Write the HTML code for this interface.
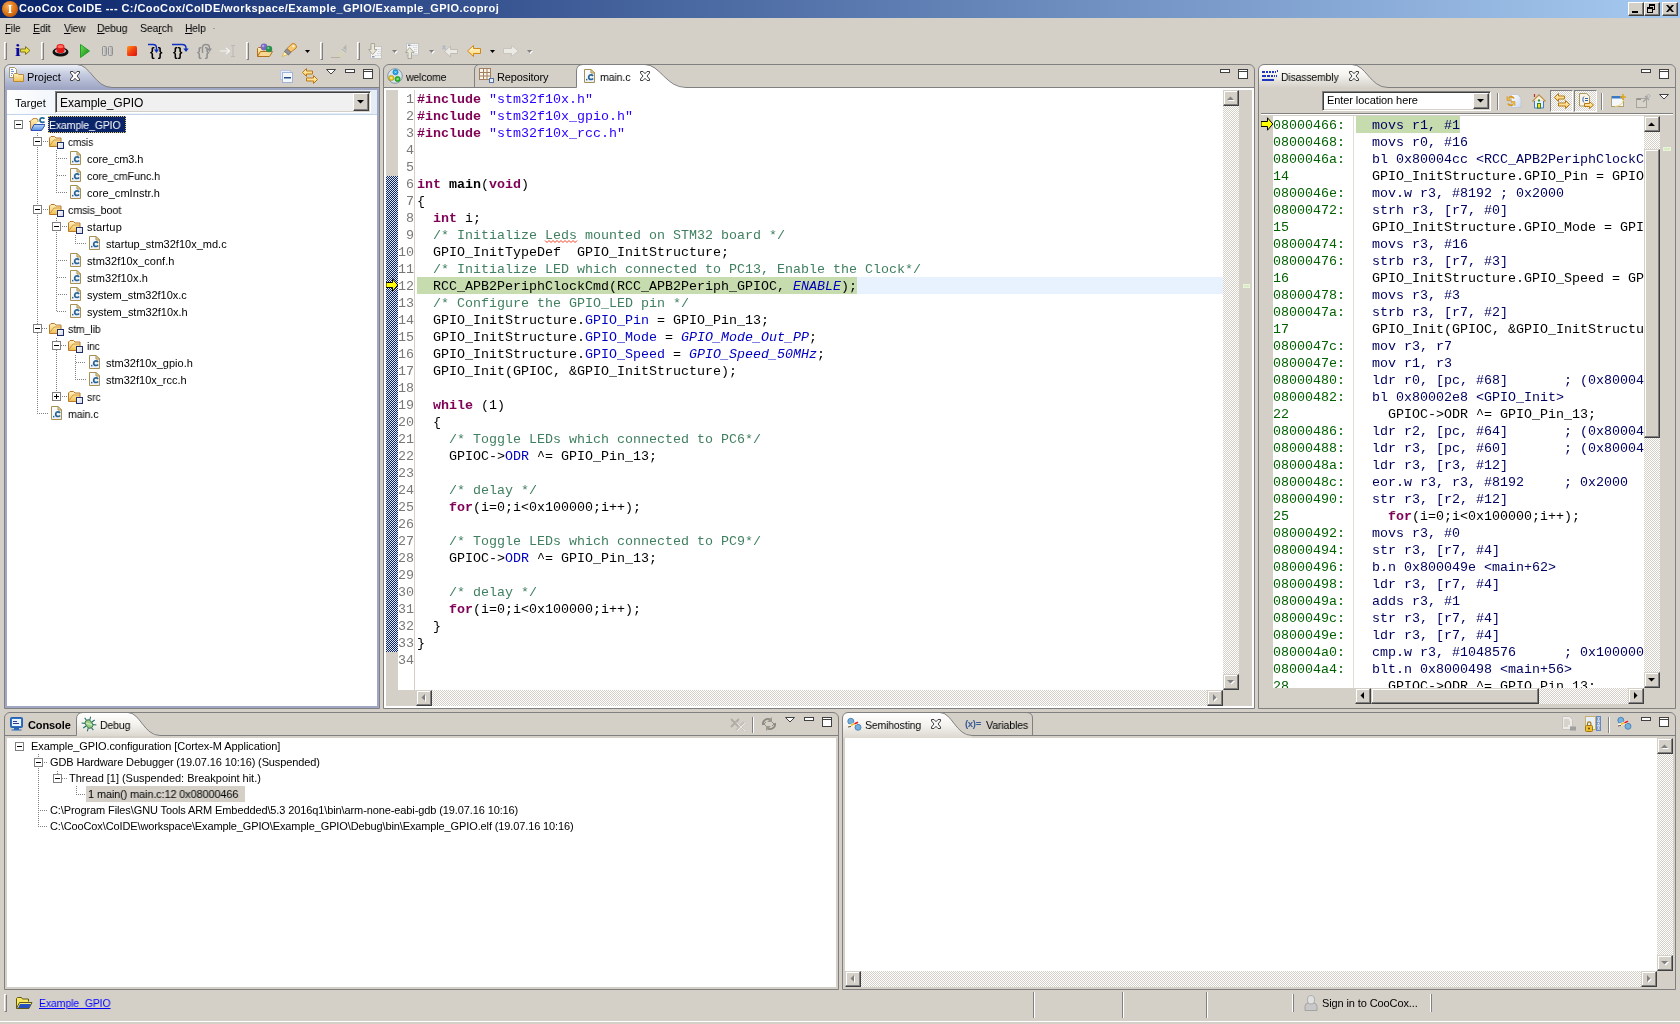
<!DOCTYPE html>
<html><head><meta charset="utf-8"><title>CooCox CoIDE</title>
<style>
*{box-sizing:border-box;margin:0;padding:0}
html,body{width:1680px;height:1024px;overflow:hidden;background:#D4D0C8}
body{position:relative;font:11px "Liberation Sans",sans-serif;color:#000}
.a{position:absolute}
.t{position:absolute;white-space:pre;line-height:13px;height:13px;will-change:transform}
.m{position:absolute;white-space:pre;font:13.33px "Liberation Mono",monospace;line-height:17px;height:17px;will-change:transform}
.kw{color:#7F0055;font-weight:bold}
.st{color:#2A00FF}
.cm{color:#3F7F5F}
.fd{color:#0000C0}
.en{color:#0000C0;font-style:italic}
.b{font-weight:bold}
.ln{color:#787878}
.ad{color:#006000}
.in{color:#000060}
.dith{background-image:conic-gradient(#fff 25%,#D4D0C8 0 50%,#fff 0 75%,#D4D0C8 0);background-size:2px 2px}
.btn{position:absolute;background:#D4D0C8;border:1px solid;border-color:#fff #404040 #404040 #fff;box-shadow:inset -1px -1px 0 #808080,inset 1px 1px 0 #D4D0C8}
.sb{position:absolute;background:#D4D0C8;border:1px solid;border-color:#D4D0C8 #404040 #404040 #D4D0C8;box-shadow:inset -1px -1px 0 #808080,inset 1px 1px 0 #fff}
.sunk{position:absolute;border:1px solid;border-color:#808080 #fff #fff #808080;box-shadow:inset 1px 1px 0 #404040,inset -1px -1px 0 #D4D0C8}
.grip{position:absolute;width:2px;border-left:1px solid #fff;border-right:1px solid #808080}
svg{position:absolute;overflow:visible}
</style></head>
<body>

<svg width="0" height="0" style="position:absolute">
<defs>
<linearGradient id="gFold" x1="0" y1="0" x2="0" y2="1"><stop offset="0" stop-color="#FFF3C0"/><stop offset="1" stop-color="#F0C050"/></linearGradient>
<linearGradient id="gFoldB" x1="0" y1="0" x2="0" y2="1"><stop offset="0" stop-color="#FFE9A0"/><stop offset="1" stop-color="#E8B040"/></linearGradient>
<linearGradient id="gPage" x1="0" y1="0" x2="1" y2="1"><stop offset="0" stop-color="#FFFFFF"/><stop offset="1" stop-color="#E4ECF8"/></linearGradient>
<linearGradient id="gBlueF" x1="0" y1="0" x2="0" y2="1"><stop offset="0" stop-color="#B8D8F8"/><stop offset="1" stop-color="#5890E0"/></linearGradient>
<linearGradient id="gOv" x1="0" y1="0" x2="1" y2="1"><stop offset="0" stop-color="#FFFFFF"/><stop offset="1" stop-color="#D0D4E0"/></linearGradient>
<linearGradient id="gArrY" x1="0" y1="0" x2="0" y2="1"><stop offset="0" stop-color="#FFF8D0"/><stop offset="1" stop-color="#FFC850"/></linearGradient>
<linearGradient id="gGreen" x1="0" y1="0" x2="1" y2="1"><stop offset="0" stop-color="#70E060"/><stop offset="1" stop-color="#108010"/></linearGradient>
<linearGradient id="gRed" x1="0" y1="0" x2="1" y2="1"><stop offset="0" stop-color="#FF9020"/><stop offset="1" stop-color="#E01010"/></linearGradient>

<!-- C file icon -->
<symbol id="iFile" viewBox="0 0 16 16">
 <path d="M3.500 1.500h6.500l3.500 3.500v9.500h-10z" fill="url(#gPage)" stroke="#A89050" stroke-width="1"/>
 <path d="M10 1.500v3.500h3.500z" fill="#F4E4B0" stroke="#A89050" stroke-width="1" stroke-linejoin="round"/>
 <rect x="5" y="10.900" width="1.400" height="1.500" fill="#2A6496"/>
 <path d="M12.100 7.900C11.500 7.200 10.800 6.900 10 6.900 8.600 6.900 7.700 7.900 7.700 9.200s.900 2.300 2.300 2.300c.800 0 1.500-.300 2.100-1" fill="none" stroke="#2A6496" stroke-width="1.700"/>
</symbol>

<!-- folder with small box overlay -->
<symbol id="iFolder" viewBox="0 0 16 16">
 <path d="M1.500 13.500v-8.500l1.500-1.500h3.500l1.500 1.500h5v8.500z" fill="url(#gFold)" stroke="#B8782C" stroke-width="1"/>
 <path d="M2 12.500l4-5.500h7" fill="none" stroke="#C88838" stroke-width="0.800"/>
 <rect x="9.500" y="9.500" width="6" height="6" fill="url(#gOv)" stroke="#1C2C6C" stroke-width="1"/>
</symbol>

<!-- project folder (open, blue, with C) -->
<symbol id="iProj" viewBox="0 0 16 16">
 <path d="M1.500 13.500v-8.500l1.500-1.500h1v-1h4v1h1v2.500" fill="url(#gFold)" stroke="#C09048" stroke-width="1"/>
 <path d="M1.500 13.500v-8h-1.500" fill="none" stroke="#A08060" stroke-width="1"/>
 <path d="M2 14.500l3-6h11.500l-4 6z" fill="url(#gBlueF)" stroke="#3050C0" stroke-width="1"/>
 <path d="M15.500 2.700C14.900 2.100 14.200 1.800 13.400 1.800c-1.500 0-2.400 1-2.400 2.300s.900 2.300 2.400 2.300c.800 0 1.500-.300 2.100-.900" fill="none" stroke="#1E6A9A" stroke-width="1.700"/>
</symbol>

<!-- yellow current-instruction arrow 12x11 -->
<symbol id="iArrow" viewBox="0 0 12 14">
 <path d="M0 4.500H6.500V0.800L11.800 7 6.500 13.200V9.500H0Z" fill="#FFFF00" stroke="#000" stroke-width="1"/>
</symbol>
</defs>
</svg>

<div class="a" style="left:0;top:0;width:1680px;height:18px;background:linear-gradient(90deg,#0A246A 0%,#A6CAF0 100%)"></div>
<div class="a" style="left:2px;top:1px;width:16px;height:16px;border-radius:8px;background:radial-gradient(circle at 40% 35%,#F8B060 0%,#E07818 45%,#A04808 100%)"></div>
<div class="t" style="left:6px;top:2px;width:8px;text-align:center;color:#fff;font:bold 13px 'Liberation Serif',serif;line-height:14px;height:14px">I</div>
<div class="t b" style="left:19px;top:2px;letter-spacing:0.42px;color:#fff">CooCox CoIDE --- C:/CooCox/CoIDE/workspace/Example_GPIO/Example_GPIO.coproj</div>
<div class="btn" style="left:1628px;top:2px;width:16px;height:14px"></div>
<div class="btn" style="left:1644px;top:2px;width:16px;height:14px"></div>
<div class="btn" style="left:1662px;top:2px;width:16px;height:14px"></div>
<div class="a" style="left:1632px;top:11px;width:6px;height:2px;background:#000"></div>
<div class="a" style="left:1649px;top:4px;width:6px;height:6px;border:1px solid #000;border-top-width:2px"></div>
<div class="a" style="left:1647px;top:7px;width:6px;height:6px;border:1px solid #000;border-top-width:2px;background:#D4D0C8"></div>
<svg style="left:1666px;top:5px" width="8" height="7" viewBox="0 0 8 7"><path d="M0 0h2l2 2 2-2h2L5 3.5 8 7H6L4 5 2 7H0l3-3.5z" fill="#000"/></svg>
<div class="t" style="left:5px;top:22px;letter-spacing:-0.12px;transform:scaleX(0.893);transform-origin:0 0"><u>F</u>ile</div>
<div class="t" style="left:33px;top:22px;letter-spacing:-0.12px;transform:scaleX(0.947);transform-origin:0 0"><u>E</u>dit</div>
<div class="t" style="left:64px;top:22px;letter-spacing:-0.12px;transform:scaleX(0.932);transform-origin:0 0"><u>V</u>iew</div>
<div class="t" style="left:97px;top:22px;letter-spacing:-0.12px;transform:scaleX(0.955);transform-origin:0 0"><u>D</u>ebug</div>
<div class="t" style="left:140px;top:22px;letter-spacing:-0.12px;transform:scaleX(0.952);transform-origin:0 0">Sea<u>r</u>ch</div>
<div class="t" style="left:185px;top:22px;letter-spacing:-0.12px;transform:scaleX(0.930);transform-origin:0 0"><u>H</u>elp</div>
<div class="a" style="left:213px;top:28px;width:2px;height:1px;background:#A0A0A0"></div>
<div class="a" style="left:4px;top:64px;width:376px;height:645px;border:1px solid #808080;border-radius:6px 6px 0 0;background:#D4D0C8"></div>
<div class="a" style="left:5px;top:87px;width:374px;height:621px;background:#9FA7C5"></div>
<svg style="left:0;top:0" width="400" height="100"><defs><linearGradient id="gTabA" x1="0" y1="0" x2="0" y2="1"><stop offset="0" stop-color="#EDF0F7"/><stop offset="0.35" stop-color="#C9CFE2"/><stop offset="1" stop-color="#9FA7C5"/></linearGradient></defs><path d="M5 88V71Q5 65 11 65H77C90 65 95 87 112 87V88Z" fill="url(#gTabA)"/><path d="M77 64.5C90 64.5 95 87.5 112 87.5H379" fill="none" stroke="#808080" stroke-width="1"/></svg>
<svg style="left:9px;top:67px" width="16" height="16" viewBox="0 0 16 16"><path d="M0.5 0.5h5l2 2v8h-7z" fill="#fff" stroke="#A89868"/><path d="M2 2.500h2M2 4.500h3M2 6.500h2M2 8.500h1" stroke="#7098D8" stroke-width="1"/><path d="M4.5 14.5v-7l1-1h3l1 1h5v7z" fill="url(#gFold)" stroke="#B8863C"/></svg>
<div class="t" style="left:27px;top:71px;letter-spacing:-0.08px">Project</div>
<svg style="left:70px;top:71px" width="10" height="10" viewBox="0 0 10 10"><path d="M0.500 0.500h2.500l2 2.200 2-2.200h2.500v1.500l-2.500 3 2.500 3v1.500h-2.500l-2-2.200-2 2.200h-2.500v-1.500l2.500-3-2.500-3z" fill="#fff" stroke="#404040" stroke-width="1"/></svg>
<svg style="left:280px;top:70px" width="14" height="14" viewBox="0 0 14 14"><rect x="0.5" y="0.5" width="10" height="9" fill="#E8EEF8" stroke="#B8C8E0"/><rect x="2.5" y="2.5" width="10" height="10" fill="#F4F7FC" stroke="#A0B4D8"/><rect x="4" y="7" width="7" height="1.5" fill="#205090"/></svg>
<svg style="left:302px;top:68px" width="16" height="16" viewBox="0 0 16 16"><path d="M0.5 4.5l4-4v2.5h6v3h-6v2.5z" fill="url(#gArrY)" stroke="#B87818"/><path d="M15.5 11.5l-4-4v2.5h-7v3h7v2.5z" fill="url(#gArrY)" stroke="#B87818"/></svg>
<svg style="left:326px;top:69px" width="10" height="6" viewBox="0 0 10 6"><path d="M0.500 0.500h9L5 5z" fill="#fff" stroke="#404040" stroke-width="1"/></svg>
<div class="a" style="left:345px;top:69px;width:10px;height:4px;border:1px solid #404040;background:#fff"></div><div class="a" style="left:363px;top:69px;width:10px;height:10px;border:1px solid #404040;background:#fff"></div><div class="a" style="left:363px;top:71px;width:10px;height:1px;background:#404040"></div>
<div class="a" style="left:7px;top:90px;width:370px;height:616px;background:#fff"></div>
<div class="a" style="left:7px;top:90px;width:370px;height:24px;background:linear-gradient(90deg,#fff 0%,#F4F7FB 10%,#E4ECF6 100%)"></div>
<div class="a" style="left:7px;top:114px;width:370px;height:1px;background:#C4D4E8"></div>
<div class="t" style="left:15px;top:97px;letter-spacing:0.04px">Target</div>
<div class="sunk" style="left:55px;top:91px;width:316px;height:22px;background:#F0F0F0"></div>
<div class="t" id="cmb" style="left:60px;top:96px;font-size:12px;line-height:15px;height:15px">Example_GPIO</div>
<div class="btn" style="left:353px;top:93px;width:16px;height:18px"></div>
<svg style="left:357px;top:100px" width="7" height="4" viewBox="0 0 7 4"><path d="M0 0h7L3.5 3.5z" fill="#000"/></svg>
<div class="a" style="left:37px;top:133px;width:1px;height:281px;background:repeating-linear-gradient(180deg,#808080 0 1px,transparent 1px 2px)"></div>
<div class="a" style="left:56px;top:150px;width:1px;height:43px;background:repeating-linear-gradient(180deg,#808080 0 1px,transparent 1px 2px)"></div>
<div class="a" style="left:56px;top:218px;width:1px;height:94px;background:repeating-linear-gradient(180deg,#808080 0 1px,transparent 1px 2px)"></div>
<div class="a" style="left:75px;top:235px;width:1px;height:9px;background:repeating-linear-gradient(180deg,#808080 0 1px,transparent 1px 2px)"></div>
<div class="a" style="left:56px;top:338px;width:1px;height:59px;background:repeating-linear-gradient(180deg,#808080 0 1px,transparent 1px 2px)"></div>
<div class="a" style="left:75px;top:355px;width:1px;height:25px;background:repeating-linear-gradient(180deg,#808080 0 1px,transparent 1px 2px)"></div>
<div class="a" style="left:14px;top:120px;width:9px;height:9px;border:1px solid #808080;background:#fff"></div><div class="a" style="left:16px;top:124px;width:5px;height:1px;background:#000"></div>
<svg style="left:29px;top:116px" width="16" height="16"><use href="#iProj" width="16" height="16"/></svg>
<div class="a" style="left:48px;top:116px;width:78px;height:17px;background:#0A246A;outline:1px dotted #E8C860;outline-offset:-1px"></div>
<div class="t" style="left:49px;top:119px;letter-spacing:-0.12px;transform:scaleX(0.954);transform-origin:0 0;color:#fff">Example_GPIO</div>
<div class="a" style="left:39px;top:141px;width:9px;height:1px;background:repeating-linear-gradient(90deg,#808080 0 1px,transparent 1px 2px)"></div>
<div class="a" style="left:33px;top:137px;width:9px;height:9px;border:1px solid #808080;background:#fff"></div><div class="a" style="left:35px;top:141px;width:5px;height:1px;background:#000"></div>
<svg style="left:48px;top:133px" width="16" height="16"><use href="#iFolder" width="16" height="16"/></svg>
<div class="t" style="left:67.75px;top:136px;letter-spacing:-0.12px;transform:scaleX(0.909);transform-origin:0 0">cmsis</div>
<div class="a" style="left:58px;top:158px;width:9px;height:1px;background:repeating-linear-gradient(90deg,#808080 0 1px,transparent 1px 2px)"></div>
<svg style="left:67px;top:150px" width="16" height="16"><use href="#iFile" width="16" height="16"/></svg>
<div class="t" style="left:86.75px;top:153px;letter-spacing:-0.12px;transform:scaleX(0.995);transform-origin:0 0">core_cm3.h</div>
<div class="a" style="left:57px;top:175px;width:10px;height:1px;background:repeating-linear-gradient(90deg,#808080 0 1px,transparent 1px 2px)"></div>
<svg style="left:67px;top:167px" width="16" height="16"><use href="#iFile" width="16" height="16"/></svg>
<div class="t" style="left:86.75px;top:170px;letter-spacing:-0.12px;transform:scaleX(0.983);transform-origin:0 0">core_cmFunc.h</div>
<div class="a" style="left:58px;top:192px;width:9px;height:1px;background:repeating-linear-gradient(90deg,#808080 0 1px,transparent 1px 2px)"></div>
<svg style="left:67px;top:184px" width="16" height="16"><use href="#iFile" width="16" height="16"/></svg>
<div class="t" style="left:86.75px;top:187px;letter-spacing:0.06px">core_cmInstr.h</div>
<div class="a" style="left:39px;top:209px;width:9px;height:1px;background:repeating-linear-gradient(90deg,#808080 0 1px,transparent 1px 2px)"></div>
<div class="a" style="left:33px;top:205px;width:9px;height:9px;border:1px solid #808080;background:#fff"></div><div class="a" style="left:35px;top:209px;width:5px;height:1px;background:#000"></div>
<svg style="left:48px;top:201px" width="16" height="16"><use href="#iFolder" width="16" height="16"/></svg>
<div class="t" style="left:67.75px;top:204px;letter-spacing:-0.12px;transform:scaleX(0.974);transform-origin:0 0">cmsis_boot</div>
<div class="a" style="left:58px;top:226px;width:9px;height:1px;background:repeating-linear-gradient(90deg,#808080 0 1px,transparent 1px 2px)"></div>
<div class="a" style="left:52px;top:222px;width:9px;height:9px;border:1px solid #808080;background:#fff"></div><div class="a" style="left:54px;top:226px;width:5px;height:1px;background:#000"></div>
<svg style="left:67px;top:218px" width="16" height="16"><use href="#iFolder" width="16" height="16"/></svg>
<div class="t" style="left:86.75px;top:221px;letter-spacing:0.19px">startup</div>
<div class="a" style="left:77px;top:243px;width:9px;height:1px;background:repeating-linear-gradient(90deg,#808080 0 1px,transparent 1px 2px)"></div>
<svg style="left:86px;top:235px" width="16" height="16"><use href="#iFile" width="16" height="16"/></svg>
<div class="t" style="left:105.75px;top:238px;letter-spacing:0.01px">startup_stm32f10x_md.c</div>
<div class="a" style="left:58px;top:260px;width:9px;height:1px;background:repeating-linear-gradient(90deg,#808080 0 1px,transparent 1px 2px)"></div>
<svg style="left:67px;top:252px" width="16" height="16"><use href="#iFile" width="16" height="16"/></svg>
<div class="t" style="left:86.75px;top:255px;letter-spacing:0.04px">stm32f10x_conf.h</div>
<div class="a" style="left:57px;top:277px;width:10px;height:1px;background:repeating-linear-gradient(90deg,#808080 0 1px,transparent 1px 2px)"></div>
<svg style="left:67px;top:269px" width="16" height="16"><use href="#iFile" width="16" height="16"/></svg>
<div class="t" style="left:86.75px;top:272px;letter-spacing:0.10px">stm32f10x.h</div>
<div class="a" style="left:58px;top:294px;width:9px;height:1px;background:repeating-linear-gradient(90deg,#808080 0 1px,transparent 1px 2px)"></div>
<svg style="left:67px;top:286px" width="16" height="16"><use href="#iFile" width="16" height="16"/></svg>
<div class="t" style="left:86.75px;top:289px;letter-spacing:-0.03px">system_stm32f10x.c</div>
<div class="a" style="left:57px;top:311px;width:10px;height:1px;background:repeating-linear-gradient(90deg,#808080 0 1px,transparent 1px 2px)"></div>
<svg style="left:67px;top:303px" width="16" height="16"><use href="#iFile" width="16" height="16"/></svg>
<div class="t" style="left:86.75px;top:306px;letter-spacing:-0.01px">system_stm32f10x.h</div>
<div class="a" style="left:38px;top:328px;width:10px;height:1px;background:repeating-linear-gradient(90deg,#808080 0 1px,transparent 1px 2px)"></div>
<div class="a" style="left:33px;top:324px;width:9px;height:9px;border:1px solid #808080;background:#fff"></div><div class="a" style="left:35px;top:328px;width:5px;height:1px;background:#000"></div>
<svg style="left:48px;top:320px" width="16" height="16"><use href="#iFolder" width="16" height="16"/></svg>
<div class="t" style="left:67.75px;top:323px;letter-spacing:-0.12px;transform:scaleX(0.956);transform-origin:0 0">stm_lib</div>
<div class="a" style="left:57px;top:345px;width:10px;height:1px;background:repeating-linear-gradient(90deg,#808080 0 1px,transparent 1px 2px)"></div>
<div class="a" style="left:52px;top:341px;width:9px;height:9px;border:1px solid #808080;background:#fff"></div><div class="a" style="left:54px;top:345px;width:5px;height:1px;background:#000"></div>
<svg style="left:67px;top:337px" width="16" height="16"><use href="#iFolder" width="16" height="16"/></svg>
<div class="t" style="left:86.75px;top:340px;letter-spacing:-0.12px;transform:scaleX(0.927);transform-origin:0 0">inc</div>
<div class="a" style="left:76px;top:362px;width:10px;height:1px;background:repeating-linear-gradient(90deg,#808080 0 1px,transparent 1px 2px)"></div>
<svg style="left:86px;top:354px" width="16" height="16"><use href="#iFile" width="16" height="16"/></svg>
<div class="t" style="left:105.75px;top:357px;letter-spacing:-0.00px">stm32f10x_gpio.h</div>
<div class="a" style="left:77px;top:379px;width:9px;height:1px;background:repeating-linear-gradient(90deg,#808080 0 1px,transparent 1px 2px)"></div>
<svg style="left:86px;top:371px" width="16" height="16"><use href="#iFile" width="16" height="16"/></svg>
<div class="t" style="left:105.75px;top:374px;letter-spacing:-0.00px">stm32f10x_rcc.h</div>
<div class="a" style="left:58px;top:396px;width:9px;height:1px;background:repeating-linear-gradient(90deg,#808080 0 1px,transparent 1px 2px)"></div>
<div class="a" style="left:52px;top:392px;width:9px;height:9px;border:1px solid #808080;background:#fff"></div><div class="a" style="left:54px;top:396px;width:5px;height:1px;background:#000"></div><div class="a" style="left:56px;top:394px;width:1px;height:5px;background:#000"></div>
<svg style="left:67px;top:388px" width="16" height="16"><use href="#iFolder" width="16" height="16"/></svg>
<div class="t" style="left:86.75px;top:391px;letter-spacing:-0.12px;transform:scaleX(0.943);transform-origin:0 0">src</div>
<div class="a" style="left:39px;top:413px;width:9px;height:1px;background:repeating-linear-gradient(90deg,#808080 0 1px,transparent 1px 2px)"></div>
<svg style="left:48px;top:405px" width="16" height="16"><use href="#iFile" width="16" height="16"/></svg>
<div class="t" style="left:67.75px;top:408px;letter-spacing:-0.12px;transform:scaleX(0.963);transform-origin:0 0">main.c</div>
<div class="a" style="left:4px;top:42px;width:3px;height:18px;border-left:1px solid #fff;border-right:1px solid #808080;border-top:1px solid #fff;border-bottom:1px solid #808080"></div>
<div class="a" style="left:41px;top:42px;width:3px;height:18px;border-left:1px solid #fff;border-right:1px solid #808080;border-top:1px solid #fff;border-bottom:1px solid #808080"></div>
<div class="a" style="left:246px;top:42px;width:3px;height:18px;border-left:1px solid #fff;border-right:1px solid #808080;border-top:1px solid #fff;border-bottom:1px solid #808080"></div>
<div class="a" style="left:320px;top:42px;width:3px;height:18px;border-left:1px solid #fff;border-right:1px solid #808080;border-top:1px solid #fff;border-bottom:1px solid #808080"></div>
<div class="a" style="left:357px;top:42px;width:3px;height:18px;border-left:1px solid #fff;border-right:1px solid #808080;border-top:1px solid #fff;border-bottom:1px solid #808080"></div>
<div class="t" style="left:14.500px;top:43px;font:bold 16px 'Liberation Serif',serif;line-height:16px;height:16px;color:#0808A0;transform:scaleX(1.25);transform-origin:0 0">i</div>
<svg style="left:20px;top:46px" width="11" height="9" viewBox="0 0 11 9"><path d="M0.500 3h5v-2.500l4.500 4-4.500 4v-2.500h-5z" fill="#E8E040" stroke="#807818" stroke-width="1"/></svg>
<svg style="left:52px;top:43px" width="17" height="14" viewBox="0 0 17 14"><ellipse cx="8.5" cy="9" rx="8" ry="4.5" fill="#101010"/><ellipse cx="8.5" cy="8" rx="5.5" ry="2.6" fill="#D8D8D8"/><path d="M4.5 8V4Q4.5 1 8.5 1T12.5 4V8Q12.5 10 8.5 10T4.5 8z" fill="#E01818"/><ellipse cx="8.5" cy="3.6" rx="3" ry="1.6" fill="#FF7060"/></svg>
<svg style="left:80px;top:44px" width="10" height="14" viewBox="0 0 10 14"><path d="M0.5 0.5L9.5 7 0.5 13.5z" fill="url(#gGreen)" stroke="#20A020" stroke-width="1"/></svg>
<div class="a" style="left:102px;top:46px;width:5px;height:10px;border:1px solid #909090;border-radius:1.5px;background:linear-gradient(90deg,#D8D8D8,#B0B0B0)"></div>
<div class="a" style="left:108px;top:46px;width:5px;height:10px;border:1px solid #909090;border-radius:1.5px;background:linear-gradient(90deg,#D8D8D8,#B0B0B0)"></div>
<div class="a" style="left:127px;top:46px;width:10px;height:10px;border-radius:1.5px;background:linear-gradient(135deg,#FF9A20 0%,#F04010 50%,#E01010 100%)"></div>
<div class="t" style="left:150px;top:45px;font:bold 12px 'Liberation Sans',sans-serif;line-height:14px;height:14px;color:#000;letter-spacing:3px">{}</div>
<svg style="left:148px;top:43px" width="14" height="11" viewBox="0 0 14 11"><path d="M0 1.5h5Q8.5 1.5 8.5 5V8" fill="none" stroke="#1030C0" stroke-width="1.4"/><path d="M6 6.5h5L8.5 10z" fill="#1030C0"/></svg>
<div class="t" style="left:173px;top:45px;font:bold 12px 'Liberation Sans',sans-serif;line-height:14px;height:14px;color:#000;letter-spacing:0px">{}</div>
<svg style="left:172px;top:43px" width="17" height="10" viewBox="0 0 17 10"><path d="M0 1.5h10Q14 1.5 14 5V6" fill="none" stroke="#1030C0" stroke-width="1.4"/><path d="M11.3 5.5h5.4L14 9z" fill="#1030C0"/></svg>
<div class="t" style="left:197px;top:45px;font:bold 12px 'Liberation Sans',sans-serif;line-height:14px;height:14px;color:#909090;letter-spacing:3px">{}</div>
<svg style="left:198px;top:43px" width="14" height="11" viewBox="0 0 14 11"><path d="M4.5 10V5Q4.5 1.5 8 1.5T11.5 5V6" fill="none" stroke="#909090" stroke-width="1.4"/><path d="M9 5.5h5L11.5 9z" fill="#909090"/></svg>
<svg style="left:220px;top:45px" width="16" height="12" viewBox="0 0 16 12"><path d="M0 6h9M6 3l3.500 3L6 9" fill="none" stroke="#F4F4F4" stroke-width="1.200"/><path d="M11 0.5h4M11 11.5h4M13 0.5v11" fill="none" stroke="#B8B8B8" stroke-width="1"/></svg>
<svg style="left:256px;top:43px" width="18" height="15" viewBox="0 0 18 15"><path d="M1.5 13.5v-8l1-1h4l1 1h7v3" fill="url(#gFold)" stroke="#B07020"/><path d="M1.5 13.5l3-5h12l-3 5z" fill="#F8D890" stroke="#B07020"/><circle cx="8" cy="4" r="3.4" fill="#7868C0"/><circle cx="7.2" cy="3" r="1.2" fill="#B0A8E0"/><circle cx="13" cy="6" r="3.2" fill="#289050"/><circle cx="12.3" cy="5" r="1.1" fill="#80C898"/></svg>
<svg style="left:281px;top:43px" width="17" height="15" viewBox="0 0 17 15"><path d="M1 13.5L4 8l4 3z" fill="#FFF8C0" stroke="#D8B040" stroke-width="0.8"/><path d="M3.5 8.5L6 5.5l4 3.5-2.5 3z" fill="#909098" stroke="#606068" stroke-width="0.8"/><path d="M6 5.5L11 0.8Q13 0 14.5 1.5T15.2 5L10 9z" fill="#F8C870" stroke="#B87820" stroke-width="0.9"/><circle cx="12.5" cy="3.3" r="1" fill="#fff"/></svg>
<svg style="left:305px;top:50px" width="5" height="3" viewBox="0 0 5 3"><path d="M0 0h5L2.5 3z" fill="#000"/></svg>
<svg style="left:331px;top:43px" width="17" height="16" viewBox="0 0 17 16"><path d="M0 14.500h9" stroke="#B4B0A8" stroke-width="1"/><path d="M4.500 14L10 7l4 3-5 4z" fill="#D6D2BC"/><path d="M10 7l5.300-5.500.2 7.500-1.500 1z" fill="#B4B4B0"/><path d="M10 7l4 3M11.500 5.300l3.800 3" stroke="#E4E4E0" stroke-width="0.800"/></svg>
<svg style="left:368px;top:43px" width="15" height="16" viewBox="0 0 15 16"><rect x="2.500" y="3.500" width="11" height="12" fill="#F4F4F2" stroke="#C4C4C0"/><path d="M10 6.500h3M10 8.500h3M9 10.500h4M7 12.500h6" stroke="#CCD2DC" stroke-dasharray="1.500 0.800"/><rect x="4" y="13" width="2.500" height="1.500" fill="#8C98B4"/><path d="M3 0.500h3.500v6h2.500L4.700 11.500 0.500 6.500H3z" fill="#E8E6D4" stroke="#A4A298" stroke-width="0.900"/></svg>
<svg style="left:393px;top:51px" width="5" height="3" viewBox="0 0 5 3"><path d="M0 0h5L2.500 3z" fill="#fff"/></svg><svg style="left:392px;top:50px" width="5" height="3" viewBox="0 0 5 3"><path d="M0 0h5L2.500 3z" fill="#808080"/></svg>
<svg style="left:405px;top:43px" width="15" height="16" viewBox="0 0 15 16"><rect x="1.500" y="0.500" width="12" height="11.500" fill="#F4F4F2" stroke="#C4C4C0"/><path d="M6 2.500h6M8 4.500h4M9 6.500h3M9 8.500h3M8 10.500h4" stroke="#CCD2DC" stroke-dasharray="1.500 0.800"/><rect x="3" y="1.500" width="2.500" height="1.500" fill="#8C98B4"/><path d="M3 15.500h3.500v-6h2.500L4.700 4.500 0.500 9.500H3z" fill="#E8E6D4" stroke="#A4A298" stroke-width="0.900"/></svg>
<svg style="left:430px;top:51px" width="5" height="3" viewBox="0 0 5 3"><path d="M0 0h5L2.500 3z" fill="#fff"/></svg><svg style="left:429px;top:50px" width="5" height="3" viewBox="0 0 5 3"><path d="M0 0h5L2.500 3z" fill="#808080"/></svg>
<svg style="left:442px;top:45px" width="16" height="12" viewBox="0 0 16 12"><path d="M15.500 4.500h-7v-3.500l-6 5.500 6 5.500v-3.500h7z" fill="#ECEAE4" stroke="#C0BCB4"/><path d="M0 1l4 3M4 1L0 4M2 0v5" stroke="#A8B0C8" stroke-width="0.8"/></svg>
<svg style="left:467px;top:45px" width="15" height="12" viewBox="0 0 15 12"><defs><linearGradient id="gBk" x1="0" y1="0" x2="0" y2="1"><stop offset="0" stop-color="#FFFBE4"/><stop offset="1" stop-color="#FFD468"/></linearGradient></defs><path d="M13.500 3.500h-7v-3l-6 5.500 6 5.500v-3h7z" fill="url(#gBk)" stroke="#D08818" stroke-linejoin="round"/></svg>
<svg style="left:490px;top:50px" width="5" height="3" viewBox="0 0 5 3"><path d="M0 0h5L2.5 3z" fill="#000"/></svg>
<svg style="left:503px;top:45px" width="16" height="12" viewBox="0 0 16 12"><path d="M0.500 3.500h8v-3l7 5.500-7 5.500v-3h-8z" fill="#ECEAE4" stroke="#C8C4BC" stroke-linejoin="round"/></svg>
<svg style="left:528px;top:51px" width="5" height="3" viewBox="0 0 5 3"><path d="M0 0h5L2.500 3z" fill="#fff"/></svg><svg style="left:527px;top:50px" width="5" height="3" viewBox="0 0 5 3"><path d="M0 0h5L2.500 3z" fill="#808080"/></svg>
<div class="a" style="left:383px;top:64px;width:872px;height:645px;border:1px solid #808080;border-radius:6px 6px 0 0;background:#D4D0C8"></div>
<svg style="left:0;top:0" width="1300" height="100"><defs><linearGradient id="gTabW" x1="0" y1="0" x2="0" y2="1"><stop offset="0" stop-color="#fff"/><stop offset="1" stop-color="#fff"/></linearGradient></defs><path d="M576 88V71Q576 65 582 65H645C660 65 666 87 686 87V88Z" fill="#fff"/><path d="M384 87.500H576.500V71Q576.500 64.500 583 64.500H645C660 64.500 666 87.500 686 87.500H1254" fill="none" stroke="#808080" stroke-width="1"/><path d="M474.500 87V70Q474.500 65 479 64.500" fill="none" stroke="#808080" stroke-width="1"/></svg>
<svg style="left:387px;top:68px" width="16" height="16" viewBox="0 0 16 16"><circle cx="8" cy="8" r="7.3" fill="#D8E4EC" stroke="#8098A8" stroke-width="1"/><circle cx="8.500" cy="4.200" r="2.600" fill="#20A0E8" stroke="#1070B0" stroke-width="0.600"/><circle cx="4.300" cy="10" r="2.600" fill="#E8C820" stroke="#A08810" stroke-width="0.600"/><circle cx="10.600" cy="11" r="2.600" fill="#28B828" stroke="#108010" stroke-width="0.600"/><path d="M7.500 3.200l2 2m0-2l-2 2M3.300 9l2 2m0-2l-2 2M9.600 10l2 2m0-2l-2 2" stroke="#fff" stroke-width="0.700" opacity="0.800"/></svg>
<div class="t" style="left:406px;top:71px;letter-spacing:-0.12px;transform:scaleX(0.949);transform-origin:0 0">welcome</div>
<svg style="left:479px;top:68px" width="16" height="16" viewBox="0 0 16 16"><rect x="0.500" y="0.500" width="11" height="11" fill="#FBF4E8" stroke="#A08060"/><path d="M4.500 0.500v11M8 0.500v11M0.500 4.500h11M0.500 8h11" stroke="#A08060" stroke-width="1"/><rect x="10.500" y="10.500" width="4" height="4" fill="#E8EEF8" stroke="#5070A8"/></svg>
<div class="t" style="left:497px;top:71px;letter-spacing:-0.12px">Repository</div>
<svg style="left:581px;top:68px" width="16" height="16"><use href="#iFile" width="16" height="16"/></svg>
<div class="t" style="left:600px;top:71px;letter-spacing:-0.12px;transform:scaleX(0.963);transform-origin:0 0">main.c</div>
<svg style="left:640px;top:71px" width="10" height="10" viewBox="0 0 10 10"><path d="M0.500 0.500h2.500l2 2.200 2-2.200h2.500v1.500l-2.500 3 2.500 3v1.500h-2.500l-2-2.200-2 2.200h-2.500v-1.500l2.500-3-2.500-3z" fill="#fff" stroke="#404040" stroke-width="1"/></svg>
<div class="a" style="left:1220px;top:69px;width:10px;height:4px;border:1px solid #404040;background:#fff"></div><div class="a" style="left:1238px;top:69px;width:10px;height:10px;border:1px solid #404040;background:#fff"></div><div class="a" style="left:1238px;top:71px;width:10px;height:1px;background:#404040"></div>
<div class="a" style="left:384px;top:88px;width:870px;height:620px;background:#fff"></div>
<div class="a" style="left:386px;top:90px;width:12px;height:616px;background:#D4D0C8"></div>
<div class="a" style="left:398px;top:690px;width:18px;height:16px;background:#D4D0C8"></div>
<div class="a" style="left:386px;top:176px;width:12px;height:476px;background-image:conic-gradient(#0A246A 25%,#E4E8F2 0 50%,#0A246A 0 75%,#E4E8F2 0);background-size:2px 2px"></div>
<div class="a" style="left:414px;top:90px;width:1px;height:600px;background:#D4D0C8"></div>
<div class="a" style="left:417px;top:277px;width:806px;height:17px;background:#E8F2FE"></div>
<div class="a" style="left:417px;top:277px;width:440px;height:17px;background:#C6DBAE"></div>
<svg style="left:386px;top:278px" width="12" height="14"><use href="#iArrow" width="12" height="14"/></svg>
<div class="m ln" style="left:382px;top:91px;width:32px;text-align:right">1</div>
<div class="m" style="left:417px;top:91px"><span class="kw">#include</span> <span class="st">"stm32f10x.h"</span></div>
<div class="m ln" style="left:382px;top:108px;width:32px;text-align:right">2</div>
<div class="m" style="left:417px;top:108px"><span class="kw">#include</span> <span class="st">"stm32f10x_gpio.h"</span></div>
<div class="m ln" style="left:382px;top:125px;width:32px;text-align:right">3</div>
<div class="m" style="left:417px;top:125px"><span class="kw">#include</span> <span class="st">"stm32f10x_rcc.h"</span></div>
<div class="m ln" style="left:382px;top:142px;width:32px;text-align:right">4</div>
<div class="m ln" style="left:382px;top:159px;width:32px;text-align:right">5</div>
<div class="m ln" style="left:382px;top:176px;width:32px;text-align:right">6</div>
<div class="m" style="left:417px;top:176px"><span class="kw">int</span> <span class="b">main</span>(<span class="kw">void</span>)</div>
<div class="m ln" style="left:382px;top:193px;width:32px;text-align:right">7</div>
<div class="m" style="left:417px;top:193px">{</div>
<div class="m ln" style="left:382px;top:210px;width:32px;text-align:right">8</div>
<div class="m" style="left:417px;top:210px">  <span class="kw">int</span> i;</div>
<div class="m ln" style="left:382px;top:227px;width:32px;text-align:right">9</div>
<div class="m" style="left:417px;top:227px">  <span class="cm">/* Initialize <span class="sq">Leds</span> mounted on STM32 board */</span></div>
<div class="m ln" style="left:382px;top:244px;width:32px;text-align:right">10</div>
<div class="m" style="left:417px;top:244px">  GPIO_InitTypeDef  GPIO_InitStructure;</div>
<div class="m ln" style="left:382px;top:261px;width:32px;text-align:right">11</div>
<div class="m" style="left:417px;top:261px">  <span class="cm">/* Initialize LED which connected to PC13, Enable the Clock*/</span></div>
<div class="m ln" style="left:382px;top:278px;width:32px;text-align:right">12</div>
<div class="m" style="left:417px;top:278px">  RCC_APB2PeriphClockCmd(RCC_APB2Periph_GPIOC, <span class="en">ENABLE</span>);</div>
<div class="m ln" style="left:382px;top:295px;width:32px;text-align:right">13</div>
<div class="m" style="left:417px;top:295px">  <span class="cm">/* Configure the GPIO_LED pin */</span></div>
<div class="m ln" style="left:382px;top:312px;width:32px;text-align:right">14</div>
<div class="m" style="left:417px;top:312px">  GPIO_InitStructure.<span class="fd">GPIO_Pin</span> = GPIO_Pin_13;</div>
<div class="m ln" style="left:382px;top:329px;width:32px;text-align:right">15</div>
<div class="m" style="left:417px;top:329px">  GPIO_InitStructure.<span class="fd">GPIO_Mode</span> = <span class="en">GPIO_Mode_Out_PP</span>;</div>
<div class="m ln" style="left:382px;top:346px;width:32px;text-align:right">16</div>
<div class="m" style="left:417px;top:346px">  GPIO_InitStructure.<span class="fd">GPIO_Speed</span> = <span class="en">GPIO_Speed_50MHz</span>;</div>
<div class="m ln" style="left:382px;top:363px;width:32px;text-align:right">17</div>
<div class="m" style="left:417px;top:363px">  GPIO_Init(GPIOC, &amp;GPIO_InitStructure);</div>
<div class="m ln" style="left:382px;top:380px;width:32px;text-align:right">18</div>
<div class="m ln" style="left:382px;top:397px;width:32px;text-align:right">19</div>
<div class="m" style="left:417px;top:397px">  <span class="kw">while</span> (1)</div>
<div class="m ln" style="left:382px;top:414px;width:32px;text-align:right">20</div>
<div class="m" style="left:417px;top:414px">  {</div>
<div class="m ln" style="left:382px;top:431px;width:32px;text-align:right">21</div>
<div class="m" style="left:417px;top:431px">    <span class="cm">/* Toggle LEDs which connected to PC6*/</span></div>
<div class="m ln" style="left:382px;top:448px;width:32px;text-align:right">22</div>
<div class="m" style="left:417px;top:448px">    GPIOC-&gt;<span class="fd">ODR</span> ^= GPIO_Pin_13;</div>
<div class="m ln" style="left:382px;top:465px;width:32px;text-align:right">23</div>
<div class="m ln" style="left:382px;top:482px;width:32px;text-align:right">24</div>
<div class="m" style="left:417px;top:482px">    <span class="cm">/* delay */</span></div>
<div class="m ln" style="left:382px;top:499px;width:32px;text-align:right">25</div>
<div class="m" style="left:417px;top:499px">    <span class="kw">for</span>(i=0;i&lt;0x100000;i++);</div>
<div class="m ln" style="left:382px;top:516px;width:32px;text-align:right">26</div>
<div class="m ln" style="left:382px;top:533px;width:32px;text-align:right">27</div>
<div class="m" style="left:417px;top:533px">    <span class="cm">/* Toggle LEDs which connected to PC9*/</span></div>
<div class="m ln" style="left:382px;top:550px;width:32px;text-align:right">28</div>
<div class="m" style="left:417px;top:550px">    GPIOC-&gt;<span class="fd">ODR</span> ^= GPIO_Pin_13;</div>
<div class="m ln" style="left:382px;top:567px;width:32px;text-align:right">29</div>
<div class="m ln" style="left:382px;top:584px;width:32px;text-align:right">30</div>
<div class="m" style="left:417px;top:584px">    <span class="cm">/* delay */</span></div>
<div class="m ln" style="left:382px;top:601px;width:32px;text-align:right">31</div>
<div class="m" style="left:417px;top:601px">    <span class="kw">for</span>(i=0;i&lt;0x100000;i++);</div>
<div class="m ln" style="left:382px;top:618px;width:32px;text-align:right">32</div>
<div class="m" style="left:417px;top:618px">  }</div>
<div class="m ln" style="left:382px;top:635px;width:32px;text-align:right">33</div>
<div class="m" style="left:417px;top:635px">}</div>
<div class="m ln" style="left:382px;top:652px;width:32px;text-align:right">34</div>
<svg style="left:545px;top:240px" width="33" height="4" viewBox="0 0 33 4"><polyline points="0,0.5 2,2.5 4,0.5 6,2.5 8,0.5 10,2.5 12,0.5 14,2.5 16,0.5 18,2.5 20,0.5 22,2.5 24,0.5 26,2.5 28,0.5 30,2.5 32,0.5" fill="none" stroke="#F04020" stroke-width="1"/></svg>
<div class="a dith" style="left:1223px;top:90px;width:16px;height:600px"></div><div class="sb" style="left:1223px;top:90px;width:16px;height:16px"></div><svg style="left:1228px;top:97px" width="7" height="4" viewBox="0 0 7 4"><path d="M0 4L3.5 0.500 7 4z" fill="#fff"/></svg><svg style="left:1227px;top:96px" width="7" height="4" viewBox="0 0 7 4"><path d="M0 4L3.5 0.500 7 4z" fill="#808080"/></svg><div class="sb" style="left:1223px;top:674px;width:16px;height:16px"></div><svg style="left:1228px;top:681px" width="7" height="4" viewBox="0 0 7 4"><path d="M0 0h7L3.5 3.500z" fill="#fff"/></svg><svg style="left:1227px;top:680px" width="7" height="4" viewBox="0 0 7 4"><path d="M0 0h7L3.5 3.500z" fill="#808080"/></svg>
<div class="a dith" style="left:416px;top:690px;width:807px;height:16px"></div><div class="sb" style="left:416px;top:690px;width:16px;height:16px"></div><svg style="left:422px;top:695px" width="4" height="7" viewBox="0 0 4 7"><path d="M4 0v7L0.500 3.500z" fill="#fff"/></svg><svg style="left:421px;top:694px" width="4" height="7" viewBox="0 0 4 7"><path d="M4 0v7L0.500 3.500z" fill="#808080"/></svg><div class="sb" style="left:1207px;top:690px;width:16px;height:16px"></div><svg style="left:1214px;top:695px" width="4" height="7" viewBox="0 0 4 7"><path d="M0 0v7L3.500 3.500z" fill="#fff"/></svg><svg style="left:1213px;top:694px" width="4" height="7" viewBox="0 0 4 7"><path d="M0 0v7L3.500 3.500z" fill="#808080"/></svg>
<div class="a" style="left:1223px;top:690px;width:29px;height:16px;background:#D4D0C8"></div>
<div class="a" style="left:1239px;top:90px;width:13px;height:600px;background:#D4D0C8"></div>
<div class="a" style="left:1243px;top:284px;width:7px;height:4px;background:#D8ECC0;border:1px solid #E8F4DC"></div>
<div class="a" style="left:1258px;top:64px;width:418px;height:645px;border:1px solid #808080;border-radius:6px 6px 0 0;background:#D4D0C8"></div>
<svg style="left:0;top:0" width="1680" height="100"><defs><linearGradient id="gTabD" x1="0" y1="0" x2="0" y2="1"><stop offset="0" stop-color="#fff"/><stop offset="0.450" stop-color="#F4F2EE"/><stop offset="1" stop-color="#D4D0C8"/></linearGradient></defs><path d="M1259 88V71Q1259 65 1265 65H1352C1366 65 1370 87 1388 87V88Z" fill="url(#gTabD)"/><path d="M1352 64.500C1366 64.500 1370 87.500 1388 87.500H1675" fill="none" stroke="#808080" stroke-width="1"/></svg>
<svg style="left:1262px;top:70px" width="16" height="12" viewBox="0 0 16 12"><g fill="#2038C0"><rect x="0" y="1" width="3" height="2"/><rect x="4" y="1" width="2" height="2"/><rect x="7" y="1" width="2" height="2"/><rect x="10" y="1" width="2" height="2"/><rect x="13" y="1" width="1" height="2"/><rect x="15" y="0" width="1" height="2"/><rect x="0" y="5" width="4" height="2"/><rect x="5" y="5" width="3" height="2"/><rect x="9" y="5" width="2" height="2"/><rect x="12" y="5" width="1" height="2"/><rect x="14" y="5" width="1" height="2"/><rect x="0" y="9" width="12" height="2"/></g></svg>
<div class="t" style="left:1281px;top:71px;letter-spacing:-0.12px;transform:scaleX(0.942);transform-origin:0 0">Disassembly</div>
<svg style="left:1349px;top:71px" width="10" height="10" viewBox="0 0 10 10"><path d="M0.500 0.500h2.500l2 2.200 2-2.200h2.500v1.500l-2.500 3 2.500 3v1.500h-2.500l-2-2.200-2 2.200h-2.500v-1.500l2.500-3-2.500-3z" fill="#F8F8F8" stroke="#404040" stroke-width="1"/></svg>
<div class="a" style="left:1641px;top:69px;width:10px;height:4px;border:1px solid #404040;background:#fff"></div><div class="a" style="left:1659px;top:69px;width:10px;height:10px;border:1px solid #404040;background:#fff"></div><div class="a" style="left:1659px;top:71px;width:10px;height:1px;background:#404040"></div>
<div class="sunk" style="left:1322px;top:91px;width:169px;height:20px;background:#fff"></div>
<div class="t" style="left:1327px;top:94px;letter-spacing:-0.08px">Enter location here</div>
<div class="btn" style="left:1473px;top:93px;width:16px;height:16px"></div>
<svg style="left:1477px;top:99px" width="7" height="4" viewBox="0 0 7 4"><path d="M0 0h7L3.500 3.500z" fill="#000"/></svg>
<div class="grip" style="left:1497px;top:93px;height:17px;border-left-color:#808080;border-right-color:#fff"></div>
<svg style="left:1506px;top:93px" width="16" height="16" viewBox="0 0 16 16"><defs><linearGradient id="gPg2" x1="0" y1="0" x2="1" y2="1"><stop offset="0" stop-color="#FFFFFF"/><stop offset="1" stop-color="#C8D8F0"/></linearGradient></defs><path d="M5.500 1.500h6l3.500 3.500v9.500h-9.500z" fill="url(#gPg2)" stroke="#C0C4CC" stroke-width="0.800"/><path d="M8 5.500a3 2.500 0 0 0-5-1M2 10.500a3 2.500 0 0 0 5 1" fill="none" stroke="#D89818" stroke-width="1.700"/><path d="M1 3.500v4h4zM9 12.500v-4h-4z" fill="#F4C040" stroke="#C08010" stroke-width="0.500"/></svg>
<svg style="left:1532px;top:93px" width="14" height="16" viewBox="0 0 14 16"><path d="M2.500 8v7h9v-7" fill="#E8F0FC" stroke="#4878C0"/><path d="M0.500 8.500L7 2l6.500 6.500" fill="none" stroke="#C09048" stroke-width="1.500"/><path d="M2 7.500L7 3l5 4.500z" fill="#F8F0D8"/><rect x="5.500" y="10.500" width="3" height="4.500" fill="#F0E020" stroke="#308030"/><rect x="6" y="6.500" width="2" height="2" fill="#309030"/><path d="M2.500 1v3" stroke="#C03020" stroke-width="1.200"/></svg>
<div class="a dith" style="left:1550px;top:90px;width:23px;height:22px;border:1px solid;border-color:#808080 #fff #fff #808080"></div>
<div class="a dith" style="left:1574px;top:90px;width:23px;height:22px;border:1px solid;border-color:#808080 #fff #fff #808080"></div>
<svg style="left:1554px;top:93px" width="16" height="16" viewBox="0 0 16 16"><path d="M0.500 4.500l4-4v2.500h6v3h-6v2.500z" fill="url(#gArrY)" stroke="#B87818"/><path d="M15.500 11.500l-4-4v2.500h-7v3h7v2.500z" fill="url(#gArrY)" stroke="#B87818"/></svg>
<svg style="left:1578px;top:93px" width="16" height="16" viewBox="0 0 16 16"><path d="M1.500 0.500h7l3 3v9.500h-10z" fill="#F8F4E8" stroke="#B09858"/><path d="M6 3.500C4.500 4.500 4.500 8.500 6 9.500" fill="none" stroke="#3060B0" stroke-width="1"/><path d="M7 5.500h3M7 7.500h3" stroke="#3060B0" stroke-width="1"/><path d="M15.500 12l-4-3.500v2h-5v3h5v2z" fill="url(#gArrY)" stroke="#B87818"/></svg>
<div class="grip" style="left:1601px;top:93px;height:17px;border-left-color:#808080;border-right-color:#fff"></div>
<svg style="left:1611px;top:93px" width="16" height="16" viewBox="0 0 16 16"><rect x="0.500" y="3.500" width="12" height="10" fill="#F4F8FC" stroke="#B0A070"/><rect x="1" y="3" width="11" height="2.500" fill="#3878C8"/><path d="M12 1v6M9 4h6" stroke="#E0A820" stroke-width="1.600"/><path d="M4 13.500Q11 13 12.500 7" fill="none" stroke="#F0D070" stroke-width="1"/></svg>
<svg style="left:1636px;top:94px" width="15" height="15" viewBox="0 0 15 15"><rect x="0.500" y="4.500" width="10" height="9" fill="#D8D4CC" stroke="#A8A49C"/><rect x="1" y="4.500" width="4" height="1.500" fill="#909090"/><path d="M7 8l3-3M9 2l4 4M10.500 3.500l2.500-2.500" stroke="#A0A0A0" stroke-width="1.300"/><circle cx="12.500" cy="2" r="1.500" fill="#D0D0D0" stroke="#A0A0A0" stroke-width="0.600"/></svg>
<svg style="left:1659px;top:94px" width="10" height="6" viewBox="0 0 10 6"><path d="M0.500 0.500h9L5 5z" fill="#fff" stroke="#404040" stroke-width="1"/></svg>
<div class="a" style="left:1261px;top:113px;width:412px;height:1px;background:#808080"></div>
<div class="a" style="left:1261px;top:114px;width:412px;height:1px;background:#fff"></div>
<div class="a" style="left:1273px;top:116px;width:371px;height:572px;background:#fff;overflow:hidden" id="dis">
<div class="a" style="left:80px;top:0;width:1px;height:572px;background:#E0DED8"></div>
<div class="a" style="left:83px;top:0px;width:104px;height:17px;background:#C6DBAE"></div>
<div class="m ad" style="left:0px;top:1px">08000466:</div>
<div class="m in" style="left:99px;top:1px">movs r1, #1</div>
<div class="m ad" style="left:0px;top:18px">08000468:</div>
<div class="m in" style="left:99px;top:18px">movs r0, #16</div>
<div class="m ad" style="left:0px;top:35px">0800046a:</div>
<div class="m in" style="left:99px;top:35px">bl 0x80004cc &lt;RCC_APB2PeriphClockCmd&gt;</div>
<div class="m ad" style="left:0px;top:52px">14</div>
<div class="m " style="left:99px;top:52px">GPIO_InitStructure.GPIO_Pin = GPIO_Pin_13;</div>
<div class="m ad" style="left:0px;top:69px">0800046e:</div>
<div class="m in" style="left:99px;top:69px">mov.w r3, #8192 ; 0x2000</div>
<div class="m ad" style="left:0px;top:86px">08000472:</div>
<div class="m in" style="left:99px;top:86px">strh r3, [r7, #0]</div>
<div class="m ad" style="left:0px;top:103px">15</div>
<div class="m " style="left:99px;top:103px">GPIO_InitStructure.GPIO_Mode = GPIO_Mode_Out_PP;</div>
<div class="m ad" style="left:0px;top:120px">08000474:</div>
<div class="m in" style="left:99px;top:120px">movs r3, #16</div>
<div class="m ad" style="left:0px;top:137px">08000476:</div>
<div class="m in" style="left:99px;top:137px">strb r3, [r7, #3]</div>
<div class="m ad" style="left:0px;top:154px">16</div>
<div class="m " style="left:99px;top:154px">GPIO_InitStructure.GPIO_Speed = GPIO_Speed_50MHz;</div>
<div class="m ad" style="left:0px;top:171px">08000478:</div>
<div class="m in" style="left:99px;top:171px">movs r3, #3</div>
<div class="m ad" style="left:0px;top:188px">0800047a:</div>
<div class="m in" style="left:99px;top:188px">strb r3, [r7, #2]</div>
<div class="m ad" style="left:0px;top:205px">17</div>
<div class="m " style="left:99px;top:205px">GPIO_Init(GPIOC, &amp;GPIO_InitStructure);</div>
<div class="m ad" style="left:0px;top:222px">0800047c:</div>
<div class="m in" style="left:99px;top:222px">mov r3, r7</div>
<div class="m ad" style="left:0px;top:239px">0800047e:</div>
<div class="m in" style="left:99px;top:239px">mov r1, r3</div>
<div class="m ad" style="left:0px;top:256px">08000480:</div>
<div class="m in" style="left:99px;top:256px">ldr r0, [pc, #68]       ; (0x80004c8 &lt;main+136&gt;)</div>
<div class="m ad" style="left:0px;top:273px">08000482:</div>
<div class="m in" style="left:99px;top:273px">bl 0x80002e8 &lt;GPIO_Init&gt;</div>
<div class="m ad" style="left:0px;top:290px">22</div>
<div class="m " style="left:99px;top:290px">  GPIOC-&gt;ODR ^= GPIO_Pin_13;</div>
<div class="m ad" style="left:0px;top:307px">08000486:</div>
<div class="m in" style="left:99px;top:307px">ldr r2, [pc, #64]       ; (0x80004c8 &lt;main+136&gt;)</div>
<div class="m ad" style="left:0px;top:324px">08000488:</div>
<div class="m in" style="left:99px;top:324px">ldr r3, [pc, #60]       ; (0x80004c8 &lt;main+136&gt;)</div>
<div class="m ad" style="left:0px;top:341px">0800048a:</div>
<div class="m in" style="left:99px;top:341px">ldr r3, [r3, #12]</div>
<div class="m ad" style="left:0px;top:358px">0800048c:</div>
<div class="m in" style="left:99px;top:358px">eor.w r3, r3, #8192     ; 0x2000</div>
<div class="m ad" style="left:0px;top:375px">08000490:</div>
<div class="m in" style="left:99px;top:375px">str r3, [r2, #12]</div>
<div class="m ad" style="left:0px;top:392px">25</div>
<div class="m " style="left:99px;top:392px">  <span class="kw">for</span>(i=0;i&lt;0x100000;i++);</div>
<div class="m ad" style="left:0px;top:409px">08000492:</div>
<div class="m in" style="left:99px;top:409px">movs r3, #0</div>
<div class="m ad" style="left:0px;top:426px">08000494:</div>
<div class="m in" style="left:99px;top:426px">str r3, [r7, #4]</div>
<div class="m ad" style="left:0px;top:443px">08000496:</div>
<div class="m in" style="left:99px;top:443px">b.n 0x800049e &lt;main+62&gt;</div>
<div class="m ad" style="left:0px;top:460px">08000498:</div>
<div class="m in" style="left:99px;top:460px">ldr r3, [r7, #4]</div>
<div class="m ad" style="left:0px;top:477px">0800049a:</div>
<div class="m in" style="left:99px;top:477px">adds r3, #1</div>
<div class="m ad" style="left:0px;top:494px">0800049c:</div>
<div class="m in" style="left:99px;top:494px">str r3, [r7, #4]</div>
<div class="m ad" style="left:0px;top:511px">0800049e:</div>
<div class="m in" style="left:99px;top:511px">ldr r3, [r7, #4]</div>
<div class="m ad" style="left:0px;top:528px">080004a0:</div>
<div class="m in" style="left:99px;top:528px">cmp.w r3, #1048576      ; 0x100000</div>
<div class="m ad" style="left:0px;top:545px">080004a4:</div>
<div class="m in" style="left:99px;top:545px">blt.n 0x8000498 &lt;main+56&gt;</div>
<div class="m ad" style="left:0px;top:562px">28</div>
<div class="m " style="left:99px;top:562px">  GPIOC-&gt;ODR ^= GPIO_Pin_13;</div>
</div>
<svg style="left:1261px;top:117px" width="12" height="14"><use href="#iArrow" width="12" height="14"/></svg>
<div class="a dith" style="left:1644px;top:116px;width:16px;height:572px"></div><div class="sb" style="left:1644px;top:116px;width:16px;height:16px"></div><svg style="left:1648px;top:122px" width="7" height="4" viewBox="0 0 7 4"><path d="M0 4L3.5 0.500 7 4z" fill="#000"/></svg><div class="sb" style="left:1644px;top:672px;width:16px;height:16px"></div><svg style="left:1648px;top:678px" width="7" height="4" viewBox="0 0 7 4"><path d="M0 0h7L3.5 3.500z" fill="#000"/></svg><div class="sb" style="left:1644px;top:149px;width:16px;height:289px"></div>
<div class="a dith" style="left:1355px;top:688px;width:289px;height:16px"></div><div class="sb" style="left:1355px;top:688px;width:16px;height:16px"></div><svg style="left:1360px;top:692px" width="4" height="7" viewBox="0 0 4 7"><path d="M4 0v7L0.500 3.500z" fill="#000"/></svg><div class="sb" style="left:1628px;top:688px;width:16px;height:16px"></div><svg style="left:1634px;top:692px" width="4" height="7" viewBox="0 0 4 7"><path d="M0 0v7L3.500 3.500z" fill="#000"/></svg><div class="sb" style="left:1371px;top:688px;width:168px;height:16px"></div>
<div class="a" style="left:1663px;top:147px;width:8px;height:4px;background:#D8ECC0;border:1px solid #E8F4DC"></div>
<div class="a" style="left:4px;top:712px;width:835px;height:278px;border:1px solid #808080;border-radius:6px 6px 0 0;background:#D4D0C8"></div>
<svg style="left:0;top:700px" width="900" height="40" viewBox="0 700 900 40"><defs><linearGradient id="gTabB" x1="0" y1="0" x2="0" y2="1"><stop offset="0" stop-color="#fff"/><stop offset="0.500" stop-color="#F4F2EE"/><stop offset="1" stop-color="#DCD8D0"/></linearGradient></defs><path d="M76 736V719Q76 713 82 713H128C140 713 144 735 160 735V736Z" fill="url(#gTabB)"/><path d="M5 735.500H76.500V719Q76.500 712.500 83 712.500H128C140 712.500 144 735.500 160 735.500H838" fill="none" stroke="#808080" stroke-width="1"/></svg>
<svg style="left:10px;top:717px" width="14" height="14" viewBox="0 0 14 14"><rect x="0.500" y="0.500" width="12" height="10" rx="1" fill="#3070C0" stroke="#2860B0"/><rect x="2" y="2" width="9" height="7" fill="#E8F4FF"/><path d="M3 4.500h4M3 6.500h6" stroke="#303890" stroke-width="1"/><path d="M4 11h5v1.500h2.500v1h-10v-1h2.500z" fill="#2868B8"/></svg>
<div class="t b" style="left:28px;top:719px;letter-spacing:-0.10px">Console</div>
<svg style="left:81px;top:716px" width="16" height="16" viewBox="0 0 16 16"><g transform="rotate(-35 8 8)"><path d="M8 0.500v3M2.500 3l3 2.500M13.500 3l-3 2.500M1 8h3.500M11.500 8h3.500M2.500 13l3-2.500M13.500 13l-3-2.500M8 12.500v3" stroke="#1C6868" stroke-width="1"/><ellipse cx="8" cy="8" rx="3.300" ry="4.600" fill="#98CC80" stroke="#2C7050" stroke-width="0.900"/><path d="M6 5.500l4 5" stroke="#D0ECC0" stroke-width="1.200"/></g></svg>
<div class="t" style="left:100px;top:719px;letter-spacing:-0.12px;transform:scaleX(0.955);transform-origin:0 0">Debug</div>
<svg style="left:730px;top:716px" width="15" height="15" viewBox="0 0 15 15"><path d="M1 3l8 8M9 3l-8 8" stroke="#B0ACA4" stroke-width="2"/><path d="M6 6l8 8M14 6l-8 8" stroke="#C4C0B8" stroke-width="2"/><path d="M7 7l8 8M15 7l-8 8" stroke="#fff" stroke-width="0.600"/></svg>
<div class="grip" style="left:752px;top:717px;height:16px;border-left-color:#808080;border-right-color:#fff"></div>
<svg style="left:761px;top:716px" width="16" height="16" viewBox="0 0 16 16"><path d="M2 9a5 5 0 0 1 8-5M14 7a5 5 0 0 1-8 5" fill="none" stroke="#8C8880" stroke-width="1.800"/><path d="M11 1v5h-5zM5 15v-5h5z" fill="#9C988F"/><path d="M5 6l-2 2 2 2M11 6l2 2-2 2" fill="none" stroke="#908C84" stroke-width="1"/></svg>
<svg style="left:785px;top:717px" width="10" height="6" viewBox="0 0 10 6"><path d="M0.500 0.500h9L5 5z" fill="#fff" stroke="#404040" stroke-width="1"/></svg>
<div class="a" style="left:804px;top:717px;width:10px;height:4px;border:1px solid #404040;background:#fff"></div><div class="a" style="left:822px;top:717px;width:10px;height:10px;border:1px solid #404040;background:#fff"></div><div class="a" style="left:822px;top:719px;width:10px;height:1px;background:#404040"></div>
<div class="a" style="left:7px;top:738px;width:829px;height:249px;background:#fff"></div>
<div class="a" style="left:38px;top:754px;width:1px;height:73px;background:repeating-linear-gradient(180deg,#808080 0 1px,transparent 1px 2px)"></div>
<div class="a" style="left:57px;top:771px;width:1px;height:3px;background:repeating-linear-gradient(180deg,#808080 0 1px,transparent 1px 2px)"></div>
<div class="a" style="left:76px;top:786px;width:1px;height:9px;background:repeating-linear-gradient(180deg,#808080 0 1px,transparent 1px 2px)"></div>
<div class="a" style="left:15px;top:742px;width:9px;height:9px;border:1px solid #808080;background:#fff"></div><div class="a" style="left:17px;top:746px;width:5px;height:1px;background:#000"></div>
<div class="t" style="left:30.5px;top:740px;letter-spacing:-0.08px">Example_GPIO.configuration [Cortex-M Application]</div>
<div class="a" style="left:40px;top:762px;width:8px;height:1px;background:repeating-linear-gradient(90deg,#808080 0 1px,transparent 1px 2px)"></div>
<div class="a" style="left:34px;top:758px;width:9px;height:9px;border:1px solid #808080;background:#fff"></div><div class="a" style="left:36px;top:762px;width:5px;height:1px;background:#000"></div>
<div class="t" style="left:49.5px;top:756px;letter-spacing:-0.12px">GDB Hardware Debugger (19.07.16 10:16) (Suspended)</div>
<div class="a" style="left:58px;top:778px;width:9px;height:1px;background:repeating-linear-gradient(90deg,#808080 0 1px,transparent 1px 2px)"></div>
<div class="a" style="left:53px;top:774px;width:9px;height:9px;border:1px solid #808080;background:#fff"></div><div class="a" style="left:55px;top:778px;width:5px;height:1px;background:#000"></div>
<div class="t" style="left:68.5px;top:772px;letter-spacing:-0.02px">Thread [1] (Suspended: Breakpoint hit.)</div>
<div class="a" style="left:78px;top:794px;width:8px;height:1px;background:repeating-linear-gradient(90deg,#808080 0 1px,transparent 1px 2px)"></div>
<div class="a" style="left:86px;top:786px;width:159px;height:16px;background:#D4D0C8"></div>
<div class="t" style="left:87.5px;top:788px;letter-spacing:-0.12px;transform:scaleX(0.994);transform-origin:0 0">1 main() main.c:12 0x08000466</div>
<div class="a" style="left:40px;top:810px;width:8px;height:1px;background:repeating-linear-gradient(90deg,#808080 0 1px,transparent 1px 2px)"></div>
<div class="t" style="left:49.5px;top:804px;letter-spacing:-0.11px">C:\Program Files\GNU Tools ARM Embedded\5.3 2016q1\bin\arm-none-eabi-gdb (19.07.16 10:16)</div>
<div class="a" style="left:40px;top:826px;width:8px;height:1px;background:repeating-linear-gradient(90deg,#808080 0 1px,transparent 1px 2px)"></div>
<div class="t" style="left:49.5px;top:820px;letter-spacing:-0.12px">C:\CooCox\CoIDE\workspace\Example_GPIO\Example_GPIO\Debug\bin\Example_GPIO.elf (19.07.16 10:16)</div>
<div class="a" style="left:842px;top:712px;width:834px;height:278px;border:1px solid #808080;border-radius:6px 6px 0 0;background:#D4D0C8"></div>
<svg style="left:0;top:700px" width="1680" height="40" viewBox="0 700 1680 40"><path d="M843 738V719Q843 713 849 713H940C952 713 956 735 972 735V738Z" fill="url(#gTabB)"/><path d="M940 712.500C952 712.500 956 735.500 972 735.500H1675" fill="none" stroke="#808080" stroke-width="1"/><path d="M1032.500 735V718Q1032.500 713 1027 712.500" fill="none" stroke="#808080" stroke-width="1"/></svg>
<svg style="left:847px;top:718px" width="16" height="14" viewBox="0 0 16 14"><circle cx="3.800" cy="3.300" r="3" fill="#78B0DC" stroke="#3878B0" stroke-width="0.800"/><circle cx="11" cy="9.300" r="3" fill="#78B0DC" stroke="#3878B0" stroke-width="0.800"/><path d="M1.500 8.500l9-4" fill="none" stroke="#fff" stroke-width="2.600"/><path d="M1 9l3-.500" stroke="#604030" stroke-width="1"/><path d="M4 7.400l3.500-1.600" stroke="#F0C020" stroke-width="1.800"/><path d="M7.500 5.800l3.500-1.600" stroke="#E02020" stroke-width="1.800"/></svg>
<div class="t" style="left:865px;top:719px;letter-spacing:-0.12px;transform:scaleX(0.946);transform-origin:0 0">Semihosting</div>
<svg style="left:931px;top:719px" width="10" height="10" viewBox="0 0 10 10"><path d="M0.500 0.500h2.500l2 2.200 2-2.200h2.500v1.500l-2.500 3 2.500 3v1.500h-2.500l-2-2.200-2 2.200h-2.500v-1.500l2.500-3-2.500-3z" fill="#F8F8F8" stroke="#404040" stroke-width="1"/></svg>
<div class="t b" style="left:965px;top:717px;color:#3A5A94;font-size:9.500px;letter-spacing:-0.300px">(x)=</div>
<div class="t" style="left:986px;top:719px;letter-spacing:-0.12px;transform:scaleX(0.960);transform-origin:0 0">Variables</div>
<svg style="left:1561px;top:716px" width="16" height="16" viewBox="0 0 16 16"><path d="M1.500 0.500h7l3 3v10h-10z" fill="#ECEAE6" stroke="#C8C4BC"/><path d="M3 4h5M3 6h6M3 8h6M3 10h4" stroke="#C0BCB4"/><rect x="9" y="10" width="6" height="5" fill="#B8B8B8"/><path d="M10 11v3M12 11v3M14 11v3" stroke="#888"/></svg>
<svg style="left:1585px;top:716px" width="16" height="16" viewBox="0 0 16 16"><rect x="0.500" y="0.500" width="10" height="13" fill="#E8F0FC" stroke="#C8B070"/><rect x="11.500" y="0.500" width="4" height="14" fill="#C8D8F0" stroke="#6888C0"/><rect x="12.500" y="2" width="2" height="2" fill="#fff" stroke="#5070A8" stroke-width="0.500"/><rect x="12.500" y="6.500" width="2" height="2" fill="#fff" stroke="#5070A8" stroke-width="0.500"/><rect x="12.500" y="11" width="2" height="2" fill="#fff" stroke="#5070A8" stroke-width="0.500"/><rect x="0.500" y="9.500" width="7" height="6" rx="1" fill="#F0C030" stroke="#A07810"/><path d="M2.500 9.500v-2a1.700 1.700 0 0 1 3.400 0v2" fill="none" stroke="#A07810" stroke-width="1.200"/><circle cx="4" cy="12.500" r="1" fill="#604808"/></svg>
<div class="grip" style="left:1608px;top:717px;height:16px;border-left-color:#808080;border-right-color:#fff"></div>
<svg style="left:1617px;top:717px" width="16" height="14" viewBox="0 0 16 14"><circle cx="3.800" cy="3.300" r="3" fill="#78B0DC" stroke="#3878B0" stroke-width="0.800"/><circle cx="11" cy="9.300" r="3" fill="#78B0DC" stroke="#3878B0" stroke-width="0.800"/><path d="M1.500 8.500l9-4" fill="none" stroke="#fff" stroke-width="2.600"/><path d="M1 9l3-.500" stroke="#604030" stroke-width="1"/><path d="M4 7.400l3.500-1.600" stroke="#F0C020" stroke-width="1.800"/><path d="M7.500 5.800l3.500-1.600" stroke="#E02020" stroke-width="1.800"/></svg>
<div class="a" style="left:1641px;top:717px;width:10px;height:4px;border:1px solid #404040;background:#fff"></div><div class="a" style="left:1659px;top:717px;width:10px;height:10px;border:1px solid #404040;background:#fff"></div><div class="a" style="left:1659px;top:719px;width:10px;height:1px;background:#404040"></div>
<div class="a" style="left:845px;top:738px;width:812px;height:233px;background:#fff"></div>
<div class="a dith" style="left:1657px;top:738px;width:16px;height:233px"></div><div class="sb" style="left:1657px;top:738px;width:16px;height:16px"></div><svg style="left:1662px;top:745px" width="7" height="4" viewBox="0 0 7 4"><path d="M0 4L3.5 0.500 7 4z" fill="#fff"/></svg><svg style="left:1661px;top:744px" width="7" height="4" viewBox="0 0 7 4"><path d="M0 4L3.5 0.500 7 4z" fill="#808080"/></svg><div class="sb" style="left:1657px;top:955px;width:16px;height:16px"></div><svg style="left:1662px;top:962px" width="7" height="4" viewBox="0 0 7 4"><path d="M0 0h7L3.5 3.500z" fill="#fff"/></svg><svg style="left:1661px;top:961px" width="7" height="4" viewBox="0 0 7 4"><path d="M0 0h7L3.5 3.500z" fill="#808080"/></svg>
<div class="a dith" style="left:845px;top:971px;width:812px;height:16px"></div><div class="sb" style="left:845px;top:971px;width:16px;height:16px"></div><svg style="left:851px;top:976px" width="4" height="7" viewBox="0 0 4 7"><path d="M4 0v7L0.500 3.500z" fill="#fff"/></svg><svg style="left:850px;top:975px" width="4" height="7" viewBox="0 0 4 7"><path d="M4 0v7L0.500 3.500z" fill="#808080"/></svg><div class="sb" style="left:1641px;top:971px;width:16px;height:16px"></div><svg style="left:1648px;top:976px" width="4" height="7" viewBox="0 0 4 7"><path d="M0 0v7L3.500 3.500z" fill="#fff"/></svg><svg style="left:1647px;top:975px" width="4" height="7" viewBox="0 0 4 7"><path d="M0 0v7L3.500 3.500z" fill="#808080"/></svg>
<div class="a" style="left:4px;top:994px;width:3px;height:18px;border-left:1px solid #fff;border-right:1px solid #808080;border-top:1px solid #fff;border-bottom:1px solid #808080"></div>
<svg style="left:16px;top:996px" width="17" height="14" viewBox="0 0 17 14"><path d="M0.500 12.500v-10l1-1h4l1 1.500h6v2.500" fill="#F8E860" stroke="#605818" stroke-width="1"/><path d="M0.500 12.500l3-6h12.500l-3 6z" fill="#F8F080" stroke="#605818" stroke-width="1"/><path d="M2 12l2-4h11l-2 4z" fill="#2850C0"/></svg>
<div class="t" style="left:39px;top:997px;letter-spacing:-0.12px;transform:scaleX(0.954);transform-origin:0 0;color:#0000FF;text-decoration:underline">Example_GPIO</div>
<div class="a" style="left:1033px;top:992px;width:2px;height:26px;border-left:1px solid #808080;border-right:1px solid #fff"></div>
<div class="a" style="left:1122px;top:992px;width:2px;height:26px;border-left:1px solid #808080;border-right:1px solid #fff"></div>
<div class="a" style="left:1206px;top:992px;width:2px;height:26px;border-left:1px solid #808080;border-right:1px solid #fff"></div>
<div class="a" style="left:1292px;top:994px;width:2px;height:18px;border-left:1px solid #fff;border-right:1px solid #808080"></div>
<div class="a" style="left:1430px;top:994px;width:2px;height:18px;border-left:1px solid #fff;border-right:1px solid #808080"></div>
<svg style="left:1304px;top:995px" width="14" height="16" viewBox="0 0 14 16"><path d="M1 15.500v-4q0-3 3-3.500h6q3 .500 3 3.500v4z" fill="#C8C8C8" stroke="#989898" stroke-width="0.800"/><ellipse cx="7" cy="4.800" rx="3.600" ry="4.200" fill="#E0E0E0" stroke="#A0A0A0" stroke-width="0.800"/></svg>
<div class="t" style="left:1322px;top:997px;letter-spacing:-0.11px">Sign in to CooCox...</div>
<div class="a" style="left:0;top:1021px;width:1680px;height:1px;background:#fff"></div>
</body></html>
